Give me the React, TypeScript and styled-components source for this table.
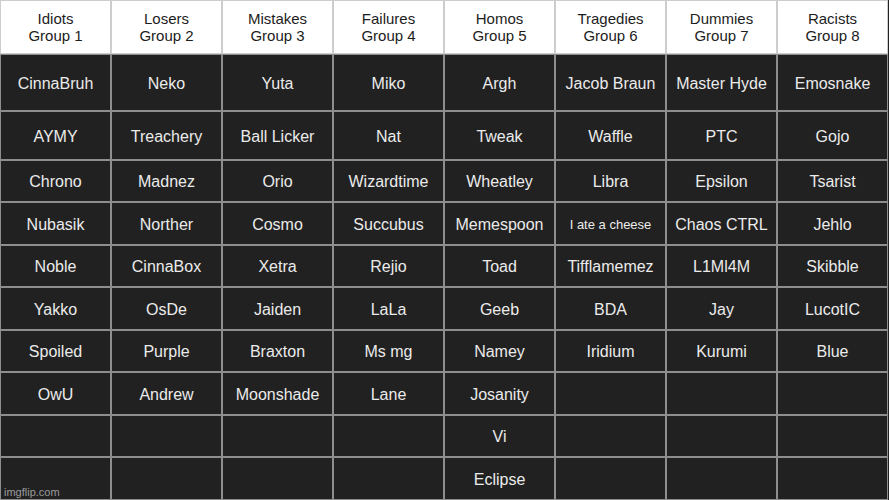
import React from "react";
import styled, { createGlobalStyle } from "styled-components";

const GlobalStyle = createGlobalStyle`
  html, body {
    margin: 0;
    padding: 0;
    background: #212121;
  }
  * {
    box-sizing: border-box;
  }
`;

const Board = styled.div`
  position: relative;
  width: 889px;
  height: 500px;
  display: grid;
  grid-template-columns: repeat(8, 111px);
  grid-template-rows: 54px 57px 49px 42px 43px 42px 43px 42px 43px 42px 43px;
  background: #212121;
  font-family: "Liberation Sans", Arial, sans-serif;
  overflow: hidden;
`;

const HeaderCell = styled.div`
  display: flex;
  align-items: center;
  justify-content: center;
  text-align: center;
  background: #ffffff;
  color: #1c1c1c;
  font-size: 15px;
  line-height: 17px;
  border: 1px solid #cdcdcd;
`;

const Cell = styled.div<{ $small?: boolean }>`
  display: flex;
  align-items: center;
  justify-content: center;
  text-align: center;
  padding-top: 2px;
  background: #212121;
  color: #ebebeb;
  font-size: ${(p) => (p.$small ? "13px" : "16px")};
  border: 1px solid #8e8e8e;
  white-space: nowrap;
`;

const Watermark = styled.div`
  position: absolute;
  left: 4px;
  bottom: 2px;
  font-size: 11px;
  color: rgba(255, 255, 255, 0.55);
  font-family: "Liberation Sans", Arial, sans-serif;
`;

const groups = [
  { name: "Idiots", members: ["CinnaBruh", "AYMY", "Chrono", "Nubasik", "Noble", "Yakko", "Spoiled", "OwU"] },
  { name: "Losers", members: ["Neko", "Treachery", "Madnez", "Norther", "CinnaBox", "OsDe", "Purple", "Andrew"] },
  { name: "Mistakes", members: ["Yuta", "Ball Licker", "Orio", "Cosmo", "Xetra", "Jaiden", "Braxton", "Moonshade"] },
  { name: "Failures", members: ["Miko", "Nat", "Wizardtime", "Succubus", "Rejio", "LaLa", "Ms mg", "Lane"] },
  { name: "Homos", members: ["Argh", "Tweak", "Wheatley", "Memespoon", "Toad", "Geeb", "Namey", "Josanity", "Vi", "Eclipse"] },
  { name: "Tragedies", members: ["Jacob Braun", "Waffle", "Libra", "I ate a cheese", "Tifflamemez", "BDA", "Iridium"] },
  { name: "Dummies", members: ["Master Hyde", "PTC", "Epsilon", "Chaos CTRL", "L1Ml4M", "Jay", "Kurumi"] },
  { name: "Racists", members: ["Emosnake", "Gojo", "Tsarist", "Jehlo", "Skibble", "LucotIC", "Blue"] },
];

const ROWS = 10;

export default function App() {
  return (
    <>
      <GlobalStyle />
      <Board>
        {groups.map((g, i) => (
          <HeaderCell key={"h" + i}>
            {g.name}
            <br />
            Group {i + 1}
          </HeaderCell>
        ))}
        {Array.from({ length: ROWS }).map((_, r) =>
          groups.map((g, c) => {
            const text = g.members[r] || "";
            return (
              <Cell key={r + "-" + c} $small={text === "I ate a cheese"}>
                {text}
              </Cell>
            );
          })
        )}
        <Watermark>imgflip.com</Watermark>
      </Board>
    </>
  );
}
